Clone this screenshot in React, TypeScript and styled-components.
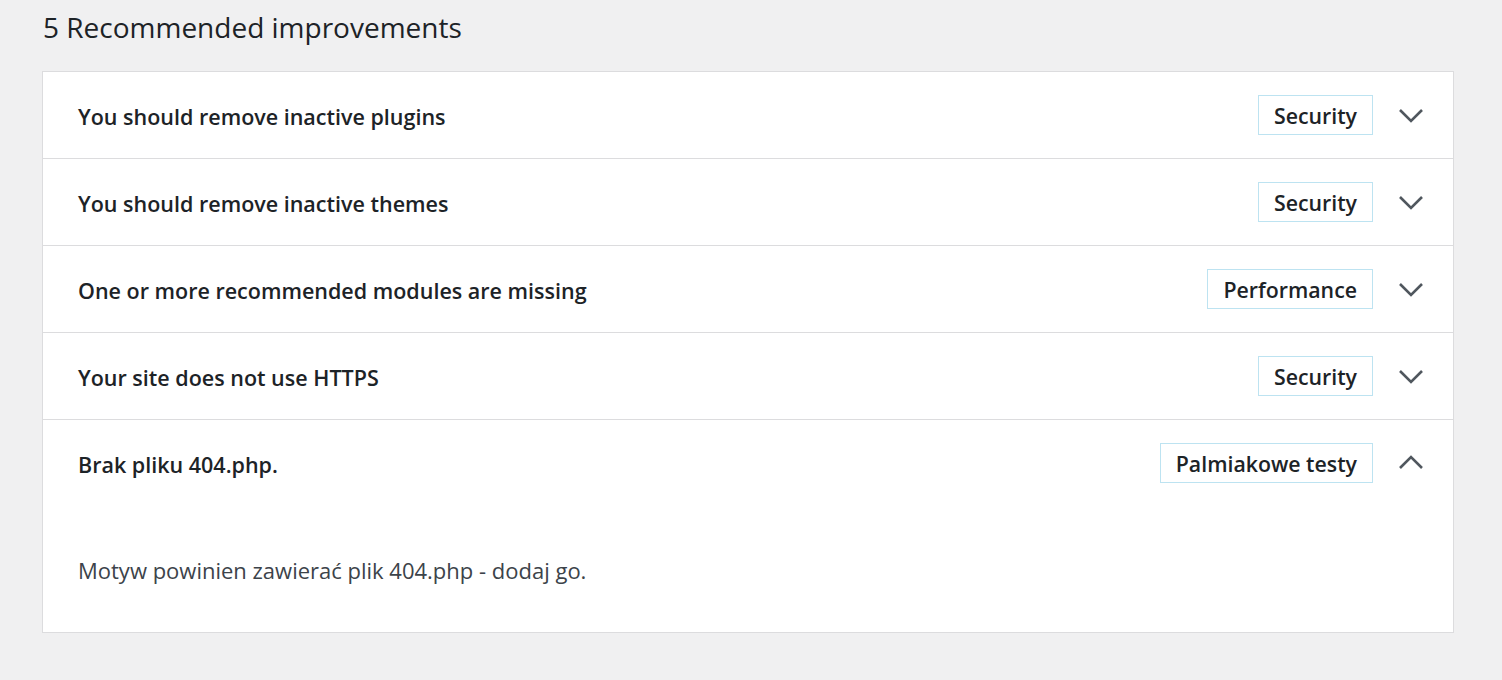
import React from "react";
import styled, { createGlobalStyle } from "styled-components";

const Global = createGlobalStyle`
  html, body { margin: 0; padding: 0; background: #f0f0f1; }
  body { font-family: "Open Sans", "Noto Sans", sans-serif; color: #1d2327; }
`;

const Page = styled.div`
  padding: 7px 48px 0 42px;
`;

const Heading = styled.h2`
  margin: 0 0 24px 1px;
  font-size: 28px;
  font-weight: 400;
  line-height: 40px;
  color: #1d2327;
`;

const Panel = styled.div`
  background: #fff;
  border: 1px solid #dcdcde;
  width: 1410px;
`;

const Item = styled.div`
  border-bottom: 1px solid #dcdcde;
  &:last-child { border-bottom: none; }
`;

const Header = styled.div`
  display: flex;
  align-items: center;
  height: 86px;
  padding: 0 29px 0 35px;
`;

const Title = styled.span`
  flex: 1;
  font-size: 21.5px;
  font-weight: 600;
  color: #1d2327;
  padding-top: 2px;
`;

const Badge = styled.span`
  display: inline-flex;
  align-items: center;
  height: 38px;
  padding: 0 15px;
  border: 1px solid #bde3f1;
  font-size: 21.3px;
  font-weight: 600;
  color: #1d2327;
  margin-right: 25px;
`;

const Chevron = styled.svg`
  width: 26px;
  height: 26px;
  color: #50575e;
`;

const Body = styled.div`
  padding: 49px 35px 47px;
  font-size: 22px;
  color: #3c434a;
  line-height: 30px;
`;

const items = [
  { title: "You should remove inactive plugins", badge: "Security" },
  { title: "You should remove inactive themes", badge: "Security" },
  { title: "One or more recommended modules are missing", badge: "Performance" },
  { title: "Your site does not use HTTPS", badge: "Security" },
  {
    title: "Brak pliku 404.php.",
    badge: "Palmiakowe testy",
    open: true,
    body: "Motyw powinien zawierać plik 404.php - dodaj go.",
  },
];

export default function App() {
  return (
    <Page>
      <Global />
      <Heading>5 Recommended improvements</Heading>
      <Panel>
        {items.map((it) => (
          <Item key={it.title}>
            <Header>
              <Title>{it.title}</Title>
              <Badge>{it.badge}</Badge>
              <Chevron viewBox="0 0 26 26" fill="none" stroke="currentColor" strokeWidth="2.6">
                {it.open ? <path d="M2 18 L13 7 L24 18" /> : <path d="M2 8 L13 19 L24 8" />}
              </Chevron>
            </Header>
            {it.body && <Body>{it.body}</Body>}
          </Item>
        ))}
      </Panel>
    </Page>
  );
}
